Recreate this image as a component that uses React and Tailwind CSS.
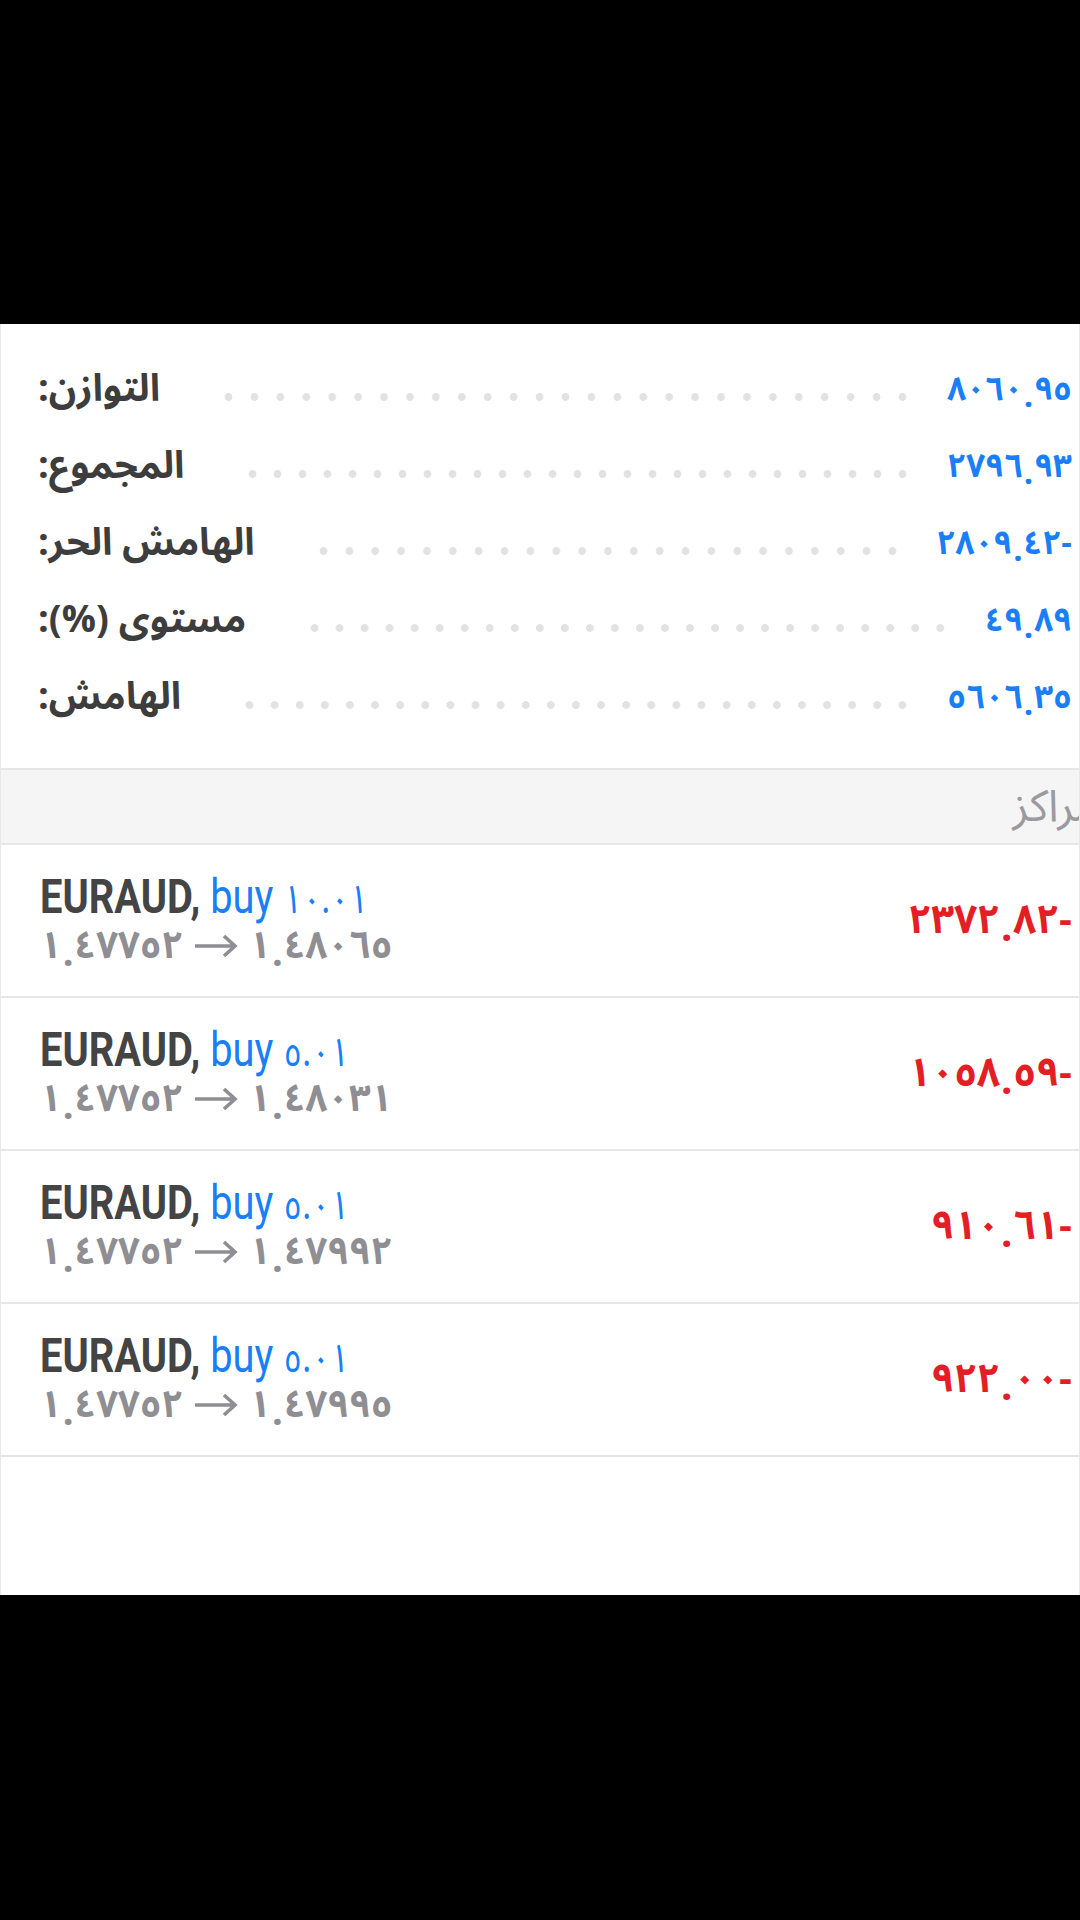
import React from "react";

const summary = [
  { label: "التوازن:", value: "٨٠٦٠٫٩٥" },
  { label: "المجموع:", value: "٢٧٩٦٫٩٣" },
  { label: "الهامش الحر:", value: "٢٨٠٩٫٤٢-" },
  { label: "مستوى (%):", value: "٤٩٫٨٩" },
  { label: "الهامش:", value: "٥٦٠٦٫٣٥" },
];

const positions = [
  { lot: "١٠.٠١", open: "١٫٤٧٧٥٢", close: "١٫٤٨٠٦٥", profit: "٢٣٧٢٫٨٢-" },
  { lot: "٥.٠١", open: "١٫٤٧٧٥٢", close: "١٫٤٨٠٣١", profit: "١٠٥٨٫٥٩-" },
  { lot: "٥.٠١", open: "١٫٤٧٧٥٢", close: "١٫٤٧٩٩٢", profit: "٩١٠٫٦١-" },
  { lot: "٥.٠١", open: "١٫٤٧٧٥٢", close: "١٫٤٧٩٩٥", profit: "٩٢٢٫٠٠-" },
];

const arabicFont =
  "font-['Noto_Sans_Arabic','Noto_Naskh_Arabic','DejaVu_Sans',sans-serif]";

function Num({ s, className }) {
  const [a, b] = s.split("٫");
  return (
    <span dir="ltr" className={`inline-flex items-baseline whitespace-nowrap ${arabicFont} ${className}`}>
      <span>{a}</span>
      <span className="relative top-[0.22em] mx-[1px]">.</span>
      <span>{b}</span>
    </span>
  );
}

function SummaryRow({ label, value }) {
  return (
    <div className="h-[77px] flex items-center">
      <div
        dir="rtl"
        className={`${arabicFont} font-bold text-[38px] leading-[77px] text-[#3d3d3d] whitespace-nowrap`}
      >
        {label}
      </div>
      <div className="flex-1 ml-[56px] mr-[32px] mt-[14px] h-[8px] [background-image:radial-gradient(circle,#e2e2e2_3.6px,transparent_4.2px)] [background-size:25px_8px] [background-repeat:space_no-repeat]" />
      <Num s={value} className="text-[33px] leading-[77px] font-bold text-[#1a7ff7]" />
    </div>
  );
}

function Arrow() {
  return (
    <svg width="46" height="26" viewBox="0 0 46 26" className="shrink-0" aria-hidden="true">
      <path
        d="M2 13 H42 M31 3 L42 13 L31 23"
        fill="none"
        stroke="#8e8e93"
        strokeWidth="3.6"
        strokeLinecap="butt"
        strokeLinejoin="miter"
      />
    </svg>
  );
}

function PositionRow({ lot, open, close, profit }) {
  return (
    <div className="h-[153px] border-b-2 border-[#e6e6e6] flex items-center justify-between pl-[39px] pr-[7px]">
      <div className="flex flex-col">
        <div
          dir="ltr"
          className="origin-left scale-x-[0.83] whitespace-nowrap text-[48px] leading-[46px] font-['Roboto','DejaVu_Sans',sans-serif]"
        >
          <span className="font-bold text-[#444444]">EURAUD, </span>
          <span className="text-[#1a7ff7]">buy </span>
          <span className={`${arabicFont} text-[#1a7ff7] text-[40px]`}>{lot}</span>
        </div>
        <div className="flex items-center gap-[10px] h-[44px] text-[#8e8e93]">
          <Num s={open} className="text-[38px] leading-[44px] font-bold" />
          <Arrow />
          <Num s={close} className="text-[38px] leading-[44px] font-bold" />
        </div>
      </div>
      <Num s={profit} className="text-[40px] leading-[50px] font-bold text-[#e31e24]" />
    </div>
  );
}

export default function App() {
  return (
    <div className="w-[1080px] h-[1920px] bg-black flex flex-col">
      <div className="h-[324px] shrink-0" />
      <div className="h-[1271px] shrink-0 bg-white border-x border-[#e8e8e8] flex flex-col overflow-hidden">
        <div className="pt-[27px] pb-[32px] pl-[37px] pr-[7px] flex flex-col">
          {summary.map((r) => (
            <SummaryRow key={r.label} {...r} />
          ))}
        </div>
        <div className="h-[2px] bg-[#e6e6e6]" />
        <div className="h-[75px] bg-[#f5f5f5] border-b-2 border-[#e6e6e6] flex items-center justify-end overflow-hidden">
          <div
            dir="rtl"
            className={`${arabicFont} text-[44px] text-[#9b9b9f] whitespace-nowrap mr-[-19px]`}
          >
            مراكز
          </div>
        </div>
        {positions.map((p, i) => (
          <PositionRow key={i} {...p} />
        ))}
      </div>
      <div className="flex-1 bg-black" />
    </div>
  );
}
